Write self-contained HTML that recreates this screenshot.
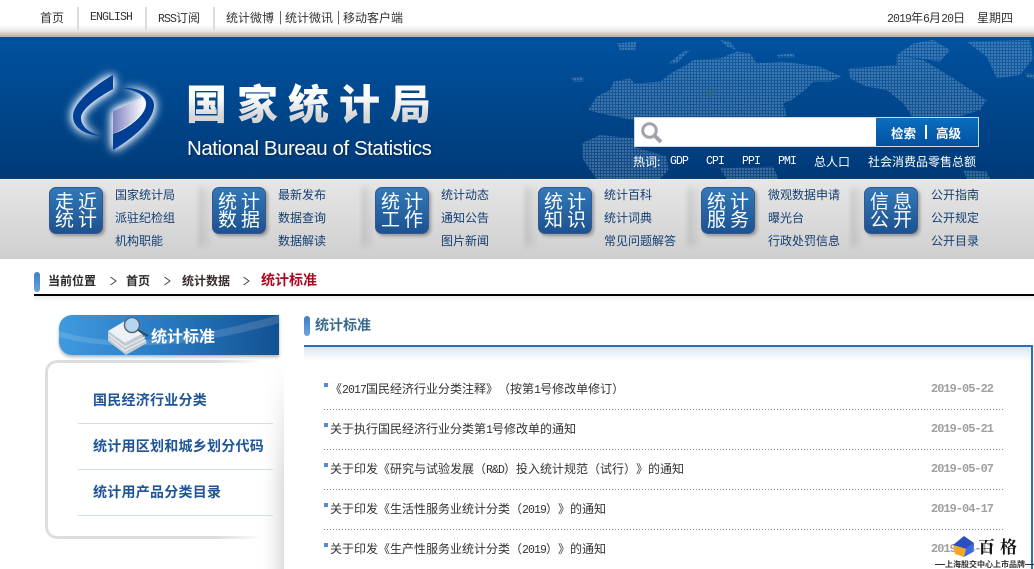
<!DOCTYPE html>
<html lang="zh-CN"><head><meta charset="utf-8"><title>统计标准</title>
<style>
*{margin:0;padding:0;box-sizing:border-box}
html,body{width:1034px;height:569px;overflow:hidden;background:#fff}
body{position:relative;font:12px/16px "WenQuanYi Zen Hei","Noto Sans CJK SC",sans-serif;color:#333;text-spacing-trim:space-all;font-kerning:none}
.a{position:absolute;white-space:nowrap}
.n{font-family:"Liberation Mono",monospace;font-size:11.500px;letter-spacing:-.9px}
.top{left:0;top:0;width:1034px;height:37px;background:linear-gradient(#fff 0,#fff 25px,#e8e8e8 31px,#aeaeae 37px)}
.sep{top:7px;width:2px;height:23px;background:#ddd}
.ban{left:0;top:37px;width:1034px;height:142px;background:linear-gradient(#00529f,#003a78);overflow:hidden}
.nav{left:0;top:179px;width:1034px;height:80px;background:linear-gradient(#e6e6e6,#cfcfcf);border-top:1px solid #eee}
.ic{width:54px;height:47px;top:187px;border-radius:7px;background:linear-gradient(#3278b8,#1c5290);border:1px solid #3a5590;box-shadow:2px 2px 3px rgba(0,0,0,.3);color:#fff;font:19px/18px "Noto Sans CJK SC",sans-serif;text-align:left;padding:4px 0 0 5px;letter-spacing:4px}
.sh{top:183px;width:18px;height:68px;background:linear-gradient(90deg,rgba(0,0,0,0),rgba(0,0,0,.08) 34%,rgba(0,0,0,0));-webkit-mask-image:linear-gradient(transparent,#000 15%,#000 85%,transparent);mask-image:linear-gradient(transparent,#000 15%,#000 85%,transparent)}
.l{color:#143e72;line-height:16px}
.d{left:931px;color:#a0a0a0;font:bold 12px/16px "Liberation Mono",monospace;letter-spacing:-1px}
.t{left:330px;color:#333}
.b{left:324px;width:4px;height:4px;background:#5b87d6}
.dl{left:324px;width:679px;height:1px;background:repeating-linear-gradient(90deg,#888 0,#888 1px,transparent 1px,transparent 3px)}
.m{left:93px;color:#1f5596;font:bold 14px/20px "Noto Sans CJK SC",sans-serif;letter-spacing:.25px}
.ln{left:78px;width:195px;height:1px;background:#d3dde6}
.hot{color:#fff}
</style></head><body>
<div class="a top"></div>
<div class="a" style="left:40px;top:10px">首页</div>
<div class="a sep" style="left:77px"></div>
<div class="a n" style="left:90px;top:10px">ENGLISH</div>
<div class="a sep" style="left:145px"></div>
<div class="a" style="left:158px;top:10px"><span class="n">RSS</span>订阅</div>
<div class="a sep" style="left:213px"></div>
<div class="a" style="left:226px;top:10px">统计微博</div>
<div class="a" style="left:279px;top:9px">|</div>
<div class="a" style="left:285px;top:10px">统计微讯</div>
<div class="a" style="left:337px;top:9px">|</div>
<div class="a" style="left:343px;top:10px">移动客户端</div>
<div class="a" style="left:887px;top:10px"><span class="n">2019</span>年<span class="n">6</span>月<span class="n">20</span>日</div>
<div class="a" style="left:977px;top:10px">星期四</div>

<div class="a ban">
<svg width="1034" height="142" style="position:absolute;left:0;top:0">
<defs>
<pattern id="dots" width="9" height="9" patternUnits="userSpaceOnUse"><rect width="9" height="9" fill="#fff" opacity=".08"/><rect width="6" height="6" fill="#9ab8da" opacity=".3"/></pattern>
<linearGradient id="pn" x1="0" x2="1"><stop offset="0" stop-color="#7d80bf"/><stop offset="1" stop-color="#fff"/></linearGradient>
</defs>
<g transform="translate(520,-37) scale(.33333)">
<g fill="url(#dots)">
<path d="M205 330 L230 290 L270 270 L280 245 L330 235 L345 250 L420 245 L460 215 L500 195 L520 180 L600 175 L650 155 L690 160 L710 190 L790 185 L900 200 L965 230 L930 245 L880 245 L855 270 L815 300 L790 310 L800 345 L775 360 L340 360 L240 340Z"/>
<path d="M985 205 L1130 195 L1130 165 L1210 180 L1300 235 L1400 300 L1380 330 L1300 355 L1180 355 L1150 310 L1100 270 L1040 260 L990 235Z"/>
<path d="M1340 125 L1530 120 L1540 175 L1500 225 L1430 235 L1400 170Z"/>
<path d="M1130 165 L1180 130 L1240 120 L1290 150 L1260 185 L1200 175Z"/>
<path d="M1515 220 L1542 222 L1542 236 L1520 232Z"/>
<path d="M290 130 L350 125 L345 150 L300 150Z"/>
<path d="M155 232 L190 230 L190 245 L160 245Z"/>
<path d="M445 190 L490 155 L510 150 L470 190Z"/>
<path d="M600 120 L630 125 L650 150 L620 140Z"/>
<path d="M185 430 L240 405 L342 415 L342 440 L440 470 L445 510 L420 537 L230 537 L190 480Z"/>
<path d="M600 505 L760 500 L775 537 L620 537Z"/>
<path d="M1330 510 L1400 515 L1410 537 L1340 537Z"/>
<path d="M770 165 L820 160 L825 172 L775 172Z"/>
</g>
<path d="M545 255L565 275L590 258L575 295L560 290Z" fill="#2d6a78" opacity=".55"/>
</g>
<g transform="translate(0,-37)">
<g style="filter:drop-shadow(0 0 5px #fff) drop-shadow(0 0 3px #dfeaff)">
<path d="M113 75 L113 89 C97 98 81 109 81 118 C81 128 92 134 102 136 C85 135 73 128 73 116 C73 103 95 85 113 75Z" fill="#003f96"/>
<path d="M122 88 C137 87 154 94 154 105 C154 122 130 140 113 150 L113 134 C128 129 148 114 146 102 C145 95 135 90 122 88Z" fill="#003f96"/>
<path d="M113 111 L143 98 C148 106 140 122 113 134Z" fill="url(#pn)"/>
</g>
</g>
</svg>
<div class="a" style="left:186px;top:38px;font:900 41px/52px 'Noto Sans CJK SC',sans-serif;letter-spacing:10px;background:linear-gradient(#fff 40%,#d6d6d6 80%);-webkit-background-clip:text;background-clip:text;color:transparent">国家统计局</div>
<div class="a" style="left:187px;top:100px;font:20.500px/24px 'Liberation Sans',sans-serif;color:#fff;letter-spacing:-.45px;text-shadow:1px 1px 2px rgba(0,0,0,.4)">National Bureau of Statistics</div>
<div class="a" style="left:634px;top:80px;width:345px;height:30px;background:#fff;border:1px solid #cfd8e4"></div>
<svg class="a" style="left:640px;top:84px" width="24" height="24"><circle cx="9.500" cy="9.500" r="6.800" fill="none" stroke="#a2a2ae" stroke-width="3"/><path d="M14.500 14.500L21 21" stroke="#a2a2ae" stroke-width="4"/></svg>
<div class="a" style="left:876px;top:81px;width:102px;height:28px;background:linear-gradient(#0a6fc0,#03519f)"></div>
<div class="a" style="left:891px;top:87px;color:#fff;font:bold 12.500px/17px 'Noto Sans CJK SC',sans-serif">检索</div>
<div class="a" style="left:925px;top:88px;width:2px;height:14px;background:#fff"></div>
<div class="a" style="left:936px;top:87px;color:#fff;font:bold 12.500px/17px 'Noto Sans CJK SC',sans-serif">高级</div>
<div class="a hot" style="left:633px;top:117px">热词:</div>
<div class="a hot n" style="left:670px;top:117px">GDP</div>
<div class="a hot n" style="left:706px;top:117px">CPI</div>
<div class="a hot n" style="left:742px;top:117px">PPI</div>
<div class="a hot n" style="left:778px;top:117px">PMI</div>
<div class="a hot" style="left:814px;top:117px">总人口</div>
<div class="a hot" style="left:868px;top:117px">社会消费品零售总额</div>
</div>

<div class="a nav"></div>
<div class="a sh" style="left:195px"></div><div class="a sh" style="left:358px"></div><div class="a sh" style="left:521px"></div><div class="a sh" style="left:684px"></div><div class="a sh" style="left:847px"></div>
<div class="a ic" style="left:49px">走近<br>统计</div>
<div class="a ic" style="left:212px">统计<br>数据</div>
<div class="a ic" style="left:375px">统计<br>工作</div>
<div class="a ic" style="left:538px">统计<br>知识</div>
<div class="a ic" style="left:701px">统计<br>服务</div>
<div class="a ic" style="left:864px">信息<br>公开</div>
<div class="a l" style="left:115px;top:187px">国家统计局</div><div class="a l" style="left:115px;top:210px">派驻纪检组</div><div class="a l" style="left:115px;top:233px">机构职能</div>
<div class="a l" style="left:278px;top:187px">最新发布</div><div class="a l" style="left:278px;top:210px">数据查询</div><div class="a l" style="left:278px;top:233px">数据解读</div>
<div class="a l" style="left:441px;top:187px">统计动态</div><div class="a l" style="left:441px;top:210px">通知公告</div><div class="a l" style="left:441px;top:233px">图片新闻</div>
<div class="a l" style="left:604px;top:187px">统计百科</div><div class="a l" style="left:604px;top:210px">统计词典</div><div class="a l" style="left:604px;top:233px">常见问题解答</div>
<div class="a l" style="left:768px;top:187px">微观数据申请</div><div class="a l" style="left:768px;top:210px">曝光台</div><div class="a l" style="left:768px;top:233px">行政处罚信息</div>
<div class="a l" style="left:931px;top:187px">公开指南</div><div class="a l" style="left:931px;top:210px">公开规定</div><div class="a l" style="left:931px;top:233px">公开目录</div>

<div class="a" style="left:34px;top:272px;width:6px;height:20px;border-radius:3px;background:linear-gradient(#3d7fc4,#6aa5dc)"></div>
<div class="a" style="left:48px;top:273px;font:bold 12px/16px 'Noto Sans CJK SC',sans-serif;color:#2b2b2b">当前位置</div>
<div class="a" style="left:126px;top:273px;font:bold 12px/16px 'Noto Sans CJK SC',sans-serif;color:#2b2b2b">首页</div>
<div class="a" style="left:182px;top:273px;font:bold 12px/16px 'Noto Sans CJK SC',sans-serif;color:#3a2b2b">统计数据</div>
<svg class="a" style="left:105px;top:274px" width="150" height="14" fill="none" stroke="#444" stroke-width="1"><path d="M5.500 3L11 7L5.500 11M59.500 3L65 7L59.500 11M138.500 3L144 7L138.500 11"/></svg>
<div class="a" style="left:261px;top:271px;font:bold 14px/18px 'Noto Sans CJK SC',sans-serif;color:#a80b20">统计标准</div>
<div class="a" style="left:34px;top:294px;width:1000px;height:2px;background:#000"></div>
<div class="a" style="left:34px;top:296px;width:1000px;height:6px;background:linear-gradient(#efefef,#fff)"></div>

<div class="a" style="left:262px;top:360px;width:22px;height:209px;background:linear-gradient(90deg,#fff,#f6f6f6 45%,#dfdfdf);-webkit-mask-image:linear-gradient(transparent,#000 60%);mask-image:linear-gradient(transparent,#000 60%)"></div>
<div class="a" style="left:59px;top:315px;width:220px;height:40px;border-radius:13px 0 0 13px;background:linear-gradient(90deg,#3f9ade,#2a7cc5 45%,#125192);box-shadow:0 2px 3px rgba(0,0,0,.3);overflow:hidden">
<svg width="220" height="40" style="display:block"><path d="M0 16C50 32 120 28 220 0L220 8C130 34 50 36 0 22Z" fill="#fff" opacity=".14"/></svg></div>
<svg class="a" style="left:95px;top:312px" width="60" height="46"><path d="M13 19L30 9L47 22L30 31Z" fill="#eef2f5"/><path d="M13 19L30 31L47 22L52 31L31 43L13 29Z" fill="#c3cad0"/><path d="M14 23L30 35L50 25M14 26L30 39L51 28" stroke="#eef2f5" fill="none"/><circle cx="37" cy="13" r="7.500" fill="#b5d5f0" stroke="#5d6670" stroke-width="1.500"/><path d="M43 18L53 24" stroke="#3d444c" stroke-width="1.800"/></svg>
<div class="a" style="left:151px;top:325px;color:#fff;font:bold 16px/21px 'Noto Sans CJK SC',sans-serif">统计标准</div>
<div class="a" style="left:45px;top:360px;width:238px;height:179px;border:3px solid #ddd;border-right:0;border-radius:12px 0 0 12px;-webkit-mask-image:linear-gradient(90deg,#000 72%,transparent 92%);mask-image:linear-gradient(90deg,#000 72%,transparent 92%)"></div>
<div class="a m" style="top:390px">国民经济行业分类</div><div class="a ln" style="top:423px"></div>
<div class="a m" style="top:436px">统计用区划和城乡划分代码</div><div class="a ln" style="top:469px"></div>
<div class="a m" style="top:482px">统计用产品分类目录</div><div class="a ln" style="top:515px"></div>

<div class="a" style="left:304px;top:316px;width:6px;height:20px;border-radius:3px;background:linear-gradient(#3d7fc4,#6aa5dc)"></div>
<div class="a" style="left:315px;top:316px;color:#3a6a8c;font:bold 14px/19px 'Noto Sans CJK SC',sans-serif">统计标准</div>
<div class="a" style="left:304px;top:345px;width:729px;height:224px;border-top:2px solid #2a70b9;border-right:2px solid #2a70b9;background:linear-gradient(#dbe6f1,#fff 14px)"></div>

<div class="a b" style="top:383px"></div><div class="a t" style="top:381px">《<span class="n">2017</span>国民经济行业分类注释》（按第<span class="n">1</span>号修改单修订）</div><div class="a d" style="top:381px">2019-05-22</div><div class="a dl" style="top:409px"></div>
<div class="a b" style="top:423px"></div><div class="a t" style="top:421px">关于执行国民经济行业分类第<span class="n">1</span>号修改单的通知</div><div class="a d" style="top:421px">2019-05-21</div><div class="a dl" style="top:449px"></div>
<div class="a b" style="top:463px"></div><div class="a t" style="top:461px">关于印发《研究与试验发展（<span class="n">R&amp;D</span>）投入统计规范（试行）》的通知</div><div class="a d" style="top:461px">2019-05-07</div><div class="a dl" style="top:489px"></div>
<div class="a b" style="top:503px"></div><div class="a t" style="top:501px">关于印发《生活性服务业统计分类（<span class="n">2019</span>）》的通知</div><div class="a d" style="top:501px">2019-04-17</div><div class="a dl" style="top:529px"></div>
<div class="a b" style="top:543px"></div><div class="a t" style="top:541px">关于印发《生产性服务业统计分类（<span class="n">2019</span>）》的通知</div><div class="a d" style="top:541px">2019-04-17</div>

<svg class="a" style="left:952px;top:535px" width="24" height="24"><path d="M1 10L12 1L22 8L14 14Z" fill="#2a4fc0"/><path d="M1 10L14 14L12 22L3 19Z" fill="#f5a623"/><path d="M14 14L22 8L21 17L12 22Z" fill="#3a68e8"/></svg>
<div class="a" style="left:978px;top:536px;font:bold 17px/20px 'Noto Serif CJK SC',serif;letter-spacing:5px;color:#111">百格</div>
<div class="a" style="left:935px;top:564px;width:10px;height:1px;background:#333"></div>
<div class="a" style="left:945px;top:559px;font:bold 8px/11px 'Noto Sans CJK SC',sans-serif;color:#333">上海股交中心上市品牌</div>
<div class="a" style="left:1025px;top:564px;width:9px;height:1px;background:#333"></div>
</body></html>
